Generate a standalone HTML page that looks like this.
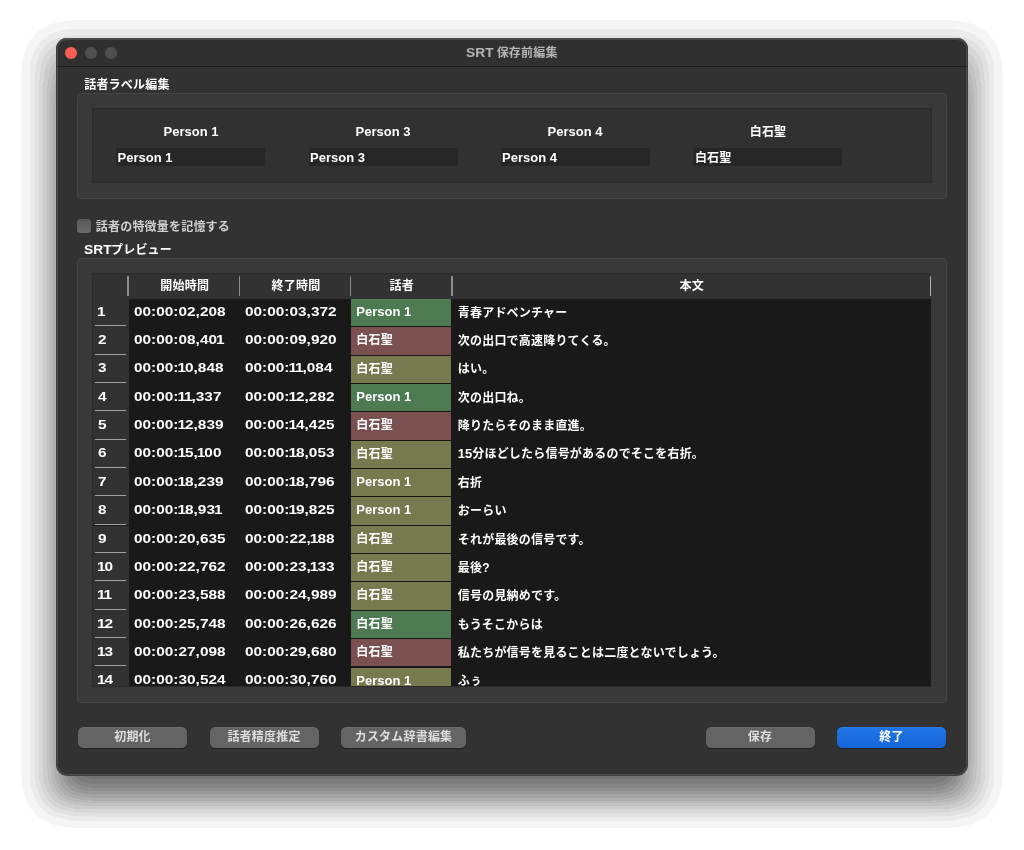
<!DOCTYPE html>
<html lang="ja">
<head>
<meta charset="utf-8">
<title>SRT 保存前編集</title>
<style>
html,body{margin:0;padding:0;}
body{width:1024px;height:850px;background:#fff;position:relative;overflow:hidden;
 font-family:"Liberation Sans","Noto Sans CJK JP",sans-serif;font-size:13px;font-weight:bold;color:#fff;}
.abs{position:absolute;}
#root{position:absolute;left:0;top:0;width:1024px;height:850px;will-change:transform;}
.j{font-size:12px;letter-spacing:.2px;white-space:nowrap;}
.s{display:inline-block;font-size:13.5px;transform:scaleX(1.02);transform-origin:0 50%;}
.d em{font-style:normal;margin:0 -.92px;}
.jc{font-size:12px;letter-spacing:.2px;}
.d{display:inline-block;font-size:13.5px;transform:scaleX(1.14);transform-origin:0 50%;white-space:nowrap;}
#win{position:absolute;left:56px;top:38px;width:912px;height:738px;background:#323232;border-radius:11px;overflow:hidden;}
#shadow{position:absolute;left:56px;top:38px;width:912px;height:738px;border-radius:11px;box-shadow:0 22.7px 29px -5.3px rgba(0,0,0,.51), 0 17px 25px 20.2px rgba(0,0,0,.187);filter:url(#poster);}
#win::after{content:"";position:absolute;inset:0;border-radius:11px;box-shadow:inset 0 0 0 1px rgba(0,0,0,.15), inset 0 1px 0 0 rgba(255,255,255,.09), inset 0 0 0 2px rgba(255,255,255,.122);pointer-events:none;}
#title{position:absolute;left:0;top:0;width:912px;height:28.2px;background:#303030;border-bottom:1.5px solid #1c1c1c;}
#title .t{position:absolute;left:410px;top:0;line-height:30px;white-space:nowrap;color:#b4b4b4;font-size:13px;}
.dot{position:absolute;top:8.5px;width:12.4px;height:12.4px;border-radius:50%;background:#4f4f4f;}
.lbl{position:absolute;white-space:nowrap;line-height:18px;}
.gb{position:absolute;background:#393939;border:1px solid #444;border-radius:4px;box-sizing:border-box;}
.inner{position:absolute;background:#313131;border:1px solid #2a2a2a;box-sizing:border-box;}
.pl{position:absolute;width:150px;text-align:center;line-height:18px;top:123px;}
.inp{position:absolute;top:148px;width:149px;height:17.5px;background:#262626;border-radius:1.5px;line-height:20px;text-indent:1.5px;white-space:nowrap;}
#tbl{position:absolute;left:92px;top:273.4px;width:839.2px;height:413.2px;background:#191919;overflow:hidden;}
#hdr{position:absolute;left:0;top:0;width:839px;height:25.4px;background:#323232;}
#hdr div{position:absolute;top:0;line-height:27.8px;text-align:center;margin-left:.6px;}
#hdr i{position:absolute;top:2.4px;height:20.2px;width:1.6px;background:#8e8e8e;border-radius:.5px;}
.fr{position:absolute;left:0;top:0;right:0;bottom:0;border:1px solid #2a2a2a;border-right-color:transparent;box-sizing:border-box;pointer-events:none;}
.row{position:absolute;left:0;width:839px;height:28.34px;}
.vh{position:absolute;left:0;top:0;width:36.6px;height:100%;background:#323232;}
.vh span{position:absolute;left:5.8px;top:0;line-height:25px;}
.vh i{position:absolute;left:3px;right:2.5px;bottom:0.8px;height:1.1px;background:#a2a2a2;}
.c{position:absolute;top:0;height:100%;line-height:27px;white-space:nowrap;box-sizing:border-box;padding-left:5.5px;}
.c1{left:36.6px;width:111px;line-height:25px;}
.c2{left:147.9px;width:111px;line-height:25px;}
.c3{left:258.8px;width:100.6px;height:27.24px;top:0.3px;line-height:26px;}
.c4{left:360.3px;width:479px;line-height:27.4px;}
.g{background:#4d7a50;} .r{background:#7a5050;} .o{background:#77794e;}
.btn{position:absolute;top:727.2px;height:20.5px;border-radius:5.5px;background:#646464;color:#dddddd;text-align:center;line-height:20px;
 box-shadow:0 0.5px 1px rgba(0,0,0,.35), inset 0 0.5px 0 rgba(255,255,255,.1);}
.btn.blue{background:linear-gradient(#2175e7,#1566d8);color:#fff;}
</style>
</head>
<body><div id="root">
<svg width="0" height="0" style="position:absolute"><filter id="poster" x="-15%" y="-15%" width="130%" height="130%" color-interpolation-filters="sRGB"><feComponentTransfer><feFuncA type="discrete" tableValues="0 0.04 0.04 0.08 0.08 0.12 0.12 0.16 0.16 0.2 0.2 0.24 0.24 0.28 0.28 0.32 0.32 0.36 0.36 0.4 0.4 0.44 0.44 0.48 0.48 0.52 0.52 0.56 0.56 0.6 0.6 0.64 0.64 0.68 0.68 0.72 0.72 0.76 0.76 0.8 0.8 0.84 0.84 0.88 0.88 0.92 0.92 0.96 0.96 1"/></feComponentTransfer></filter></svg>
<div id="shadow"></div>
<div id="win">
 <div id="title"><div class="t"><span class="s">SRT</span> <span class="j">保存前編集</span></div>
  <div class="dot" style="left:8.6px;background:#fd5f57"></div><div class="dot" style="left:29px"></div><div class="dot" style="left:49px"></div>
 </div>
</div>
<div class="lbl j" style="left:84.2px;top:75.7px">話者ラベル編集</div>
<div class="gb" style="left:77px;top:93px;width:870px;height:105.5px"></div>
<div class="inner" style="left:92px;top:108px;width:839.6px;height:75px"></div>
<div class="pl" style="left:116px">Person 1</div><div class="inp" style="left:116px">Person 1</div>
<div class="pl" style="left:308px">Person 3</div><div class="inp" style="left:308.5px">Person 3</div>
<div class="pl" style="left:500px">Person 4</div><div class="inp" style="left:500.5px">Person 4</div>
<div class="pl jc" style="left:693px">白石聖</div><div class="inp" style="left:693.4px"><span class="j">白石聖</span></div>
<div class="abs" style="left:77px;top:218.5px;width:14px;height:14px;border-radius:3.5px;background:linear-gradient(#585858,#6a6a6a);"></div>
<div class="lbl j" style="left:95.8px;top:218px;color:#d0d0d0">話者の特徴量を記憶する</div>
<div class="lbl" style="left:84px;top:240.7px"><span class="s">SRT</span><span class="j">プレビュー</span></div>
<div class="gb" style="left:77px;top:258.2px;width:870px;height:444.4px"></div>
<div id="tbl">
<div class="row" style="top:25.40px"><div class="vh"><span class="d"><em>1</em></span><i></i></div><div class="c c1"><span class="d">00:00:02,208</span></div><div class="c c2"><span class="d">00:00:03,372</span></div><div class="c c3 g">Person 1</div><div class="c c4"><span class="j">青春アドベンチャー</span></div></div>
<div class="row" style="top:53.74px"><div class="vh"><span class="d">2</span><i></i></div><div class="c c1"><span class="d">00:00:08,40<em>1</em></span></div><div class="c c2"><span class="d">00:00:09,920</span></div><div class="c c3 r"><span class="j">白石聖</span></div><div class="c c4"><span class="j">次の出口で高速降りてくる。</span></div></div>
<div class="row" style="top:82.08px"><div class="vh"><span class="d">3</span><i></i></div><div class="c c1"><span class="d">00:00:<em>1</em>0,848</span></div><div class="c c2"><span class="d">00:00:<em>1</em><em>1</em>,084</span></div><div class="c c3 o"><span class="j">白石聖</span></div><div class="c c4"><span class="j">はい。</span></div></div>
<div class="row" style="top:110.42px"><div class="vh"><span class="d">4</span><i></i></div><div class="c c1"><span class="d">00:00:<em>1</em><em>1</em>,337</span></div><div class="c c2"><span class="d">00:00:<em>1</em>2,282</span></div><div class="c c3 g">Person 1</div><div class="c c4"><span class="j">次の出口ね。</span></div></div>
<div class="row" style="top:138.76px"><div class="vh"><span class="d">5</span><i></i></div><div class="c c1"><span class="d">00:00:<em>1</em>2,839</span></div><div class="c c2"><span class="d">00:00:<em>1</em>4,425</span></div><div class="c c3 r"><span class="j">白石聖</span></div><div class="c c4"><span class="j">降りたらそのまま直進。</span></div></div>
<div class="row" style="top:167.10px"><div class="vh"><span class="d">6</span><i></i></div><div class="c c1"><span class="d">00:00:<em>1</em>5,<em>1</em>00</span></div><div class="c c2"><span class="d">00:00:<em>1</em>8,053</span></div><div class="c c3 o"><span class="j">白石聖</span></div><div class="c c4">15<span class="j">分ほどしたら信号があるのでそこを右折。</span></div></div>
<div class="row" style="top:195.44px"><div class="vh"><span class="d">7</span><i></i></div><div class="c c1"><span class="d">00:00:<em>1</em>8,239</span></div><div class="c c2"><span class="d">00:00:<em>1</em>8,796</span></div><div class="c c3 o">Person 1</div><div class="c c4"><span class="j">右折</span></div></div>
<div class="row" style="top:223.78px"><div class="vh"><span class="d">8</span><i></i></div><div class="c c1"><span class="d">00:00:<em>1</em>8,93<em>1</em></span></div><div class="c c2"><span class="d">00:00:<em>1</em>9,825</span></div><div class="c c3 o">Person 1</div><div class="c c4"><span class="j">おーらい</span></div></div>
<div class="row" style="top:252.12px"><div class="vh"><span class="d">9</span><i></i></div><div class="c c1"><span class="d">00:00:20,635</span></div><div class="c c2"><span class="d">00:00:22,<em>1</em>88</span></div><div class="c c3 o"><span class="j">白石聖</span></div><div class="c c4"><span class="j">それが最後の信号です。</span></div></div>
<div class="row" style="top:280.46px"><div class="vh"><span class="d"><em>1</em>0</span><i></i></div><div class="c c1"><span class="d">00:00:22,762</span></div><div class="c c2"><span class="d">00:00:23,<em>1</em>33</span></div><div class="c c3 o"><span class="j">白石聖</span></div><div class="c c4"><span class="j">最後?</span></div></div>
<div class="row" style="top:308.80px"><div class="vh"><span class="d"><em>1</em><em>1</em></span><i></i></div><div class="c c1"><span class="d">00:00:23,588</span></div><div class="c c2"><span class="d">00:00:24,989</span></div><div class="c c3 o"><span class="j">白石聖</span></div><div class="c c4"><span class="j">信号の見納めです。</span></div></div>
<div class="row" style="top:337.14px"><div class="vh"><span class="d"><em>1</em>2</span><i></i></div><div class="c c1"><span class="d">00:00:25,748</span></div><div class="c c2"><span class="d">00:00:26,626</span></div><div class="c c3 g"><span class="j">白石聖</span></div><div class="c c4"><span class="j">もうそこからは</span></div></div>
<div class="row" style="top:365.48px"><div class="vh"><span class="d"><em>1</em>3</span><i></i></div><div class="c c1"><span class="d">00:00:27,098</span></div><div class="c c2"><span class="d">00:00:29,680</span></div><div class="c c3 r"><span class="j">白石聖</span></div><div class="c c4"><span class="j">私たちが信号を見ることは二度とないでしょう。</span></div></div>
<div class="row" style="top:393.82px"><div class="vh"><span class="d"><em>1</em>4</span><i></i></div><div class="c c1"><span class="d">00:00:30,524</span></div><div class="c c2"><span class="d">00:00:30,760</span></div><div class="c c3 o">Person 1</div><div class="c c4"><span class="j">ふぅ</span></div></div>
<div id="hdr">
 <div class="jc" style="left:36.6px;width:111px">開始時間</div><div class="jc" style="left:147.9px;width:111px">終了時間</div><div class="jc" style="left:258.8px;width:100.6px">話者</div><div class="jc" style="left:359.6px;width:479px">本文</div>
 <i style="left:35.2px"></i><i style="left:146.6px"></i><i style="left:257.8px"></i><i style="left:359px"></i><i style="left:837.6px;width:1.4px;background:#b0b0b0"></i>
</div>
<b class="fr"></b>
</div>
<div class="btn" style="left:78px;width:109px"><div class="jc">初期化</div></div>
<div class="btn" style="left:209.5px;width:109px"><div class="jc">話者精度推定</div></div>
<div class="btn" style="left:341px;width:125px"><div class="jc">カスタム辞書編集</div></div>
<div class="btn" style="left:705.5px;width:109px"><div class="jc">保存</div></div>
<div class="btn blue" style="left:837px;width:109px"><div class="jc">終了</div></div>
</div></body>
</html>
